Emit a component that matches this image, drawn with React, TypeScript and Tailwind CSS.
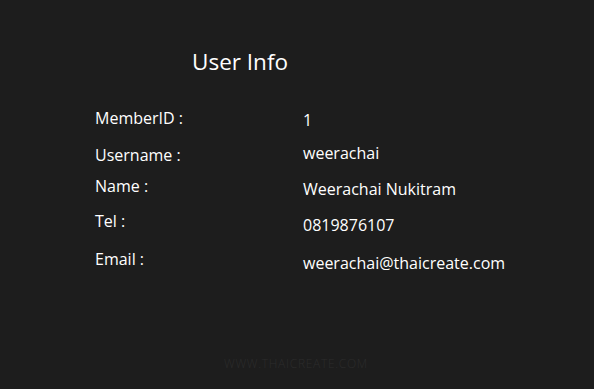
import React from 'react';

function Row({ label, value, rowClass, valueClass }: { label: string; value: string; rowClass: string; valueClass: string }) {
  return (
    <div className={`flex text-[16px] leading-[20px] ${rowClass}`}>
      <span className="w-[208px]">{label}</span>
      <span className={valueClass}>{value}</span>
    </div>
  );
}

export default function App() {
  return (
    <div className="w-[594px] h-[389px] bg-[#1d1d1d] text-white flex flex-col font-['Open_Sans','Noto_Sans',sans-serif]">
      <h1 className="ml-[192px] mt-[46px] text-[22.5px] leading-[32px] font-normal">User Info</h1>

      <div className="mt-[30px] ml-[95px] flex flex-col">
        <Row label="MemberID :" value="1" rowClass="h-[37px]" valueClass="mt-[2px]" />
        <Row label="Username :" value="weerachai" rowClass="h-[31px]" valueClass="-mt-[2px]" />
        <Row label="Name :" value="Weerachai Nukitram" rowClass="h-[35px]" valueClass="mt-[3px]" />
        <Row label="Tel :" value="0819876107" rowClass="h-[38px]" valueClass="mt-[4px]" />
        <Row label="Email :" value="weerachai@thaicreate.com" rowClass="h-[38px]" valueClass="mt-[4px]" />
      </div>

      <div className="mt-auto mb-[16px] ml-[224px] text-[12px] tracking-[0.7px] text-[#2c2c2c] font-light">
        WWW.THAICREATE.COM
      </div>
    </div>
  );
}
